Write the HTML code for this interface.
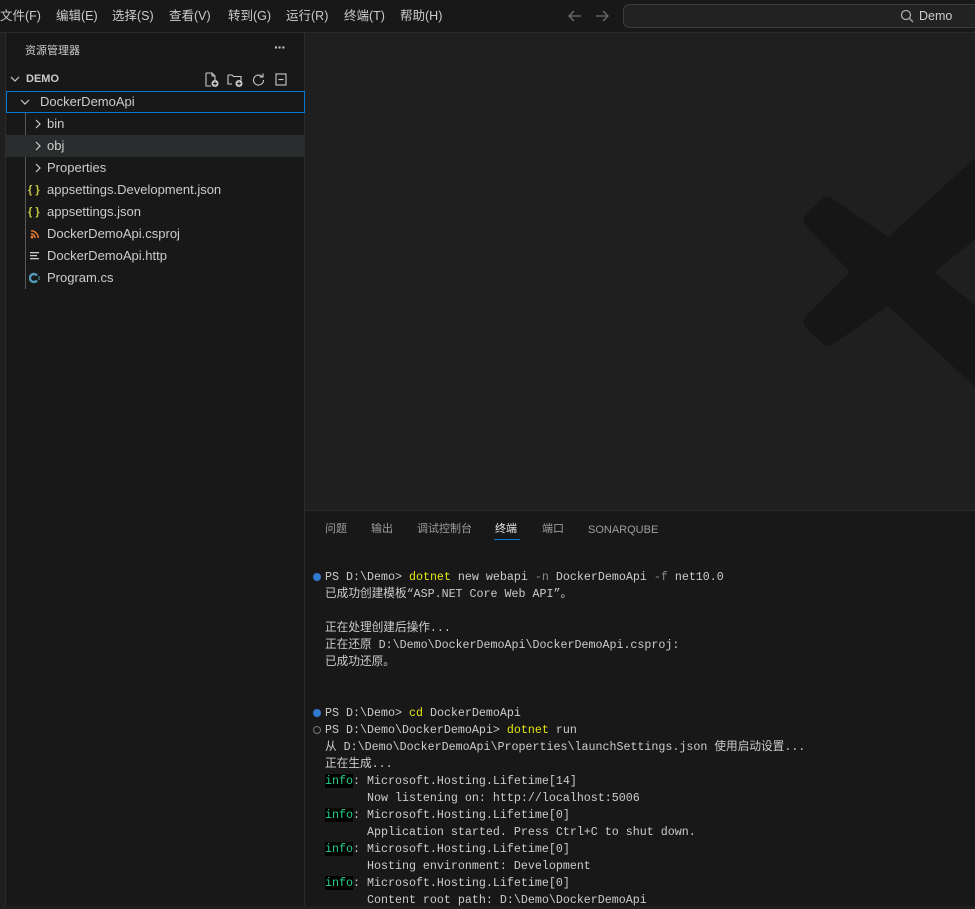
<!DOCTYPE html>
<html><head><meta charset="utf-8"><style>
*{margin:0;padding:0;box-sizing:border-box}
html,body{width:975px;height:906px;overflow:hidden;background:#1f1f1f;font-family:"Liberation Sans","Noto Sans CJK SC",sans-serif;color:#ccc}
.title{position:absolute;left:0;top:0;width:975px;height:33px;background:#181818;border-bottom:1px solid #2b2b2b}
.menu{position:absolute;top:8px;font-size:12.5px;line-height:16px;color:#ccc}
.search{position:absolute;left:623px;top:4px;width:360px;height:24px;background:#222;border:1px solid #3c3c3c;border-radius:6px}
.side{position:absolute;left:5px;top:33px;width:300px;height:873px;background:#181818;border-left:1px solid #2b2b2b;border-right:1px solid #2b2b2b}
.row{position:absolute;left:0;width:299px;height:22px;font-size:13px;line-height:22px;color:#ccc}
.t{position:absolute;left:41px}
.panel{position:absolute;left:305px;top:510px;width:670px;height:396px;background:#181818;border-top:1px solid #2b2b2b}
.tab{position:absolute;top:11px;font-size:11px;line-height:14px;color:#9d9d9d}
.term{position:absolute;left:20px;top:58px;font-family:"Liberation Mono","Noto Sans CJK SC",monospace;font-size:11.67px;line-height:17px;color:#ccc;white-space:pre}
.y{color:#e5e510}.g{color:#23d18b;background:#000}.m{color:#8b8b8b}
.dot{position:absolute;left:8px;width:8px;height:8px;border-radius:50%}
</style></head><body>
<div class="title">
<span class="menu" style="left:0">文件(F)</span>
<span class="menu" style="left:56px">编辑(E)</span>
<span class="menu" style="left:112px">选择(S)</span>
<span class="menu" style="left:169px">查看(V)</span>
<span class="menu" style="left:228px">转到(G)</span>
<span class="menu" style="left:286px">运行(R)</span>
<span class="menu" style="left:344px">终端(T)</span>
<span class="menu" style="left:400px">帮助(H)</span>
<svg style="position:absolute;left:567px;top:8px" width="44" height="16" fill="none" stroke="#6e6e6e" stroke-width="1.3"><path d="M2 8h12M7 3L2 8l5 5"/><path d="M29 8h12M36 3l5 5-5 5"/></svg>
<div class="search"><svg style="position:absolute;left:276px;top:4px" width="14" height="14" fill="none" stroke="#aaa" stroke-width="1.3"><circle cx="6" cy="6" r="4.5"/><path d="M9.3 9.3L13 13"/></svg><span style="position:absolute;left:295px;top:4px;font-size:12.5px;line-height:15px;color:#ccc">Demo</span></div>
</div>
<svg style="position:absolute;left:0;top:0" width="975" height="510"><path fill="#161616" d="M830 197 Q826 195 822 199 L806 214 Q801 220 806 226 L850 272 L806 316 Q801 322 806 328 L822 343 Q826 347 832 345 L888 306 L975 387 L975 305 L934 272 L975 240 L975 158 L888 237 Z"/></svg>
<div class="side">
<div style="position:absolute;left:19px;top:11px;font-size:11px;line-height:14px;color:#ccc">资源管理器</div>
<div style="position:absolute;left:268px;top:6px;font-size:14px;color:#ccc;letter-spacing:-1px;font-weight:bold">···</div>
<div class="row" style="top:35px"><svg style="position:absolute;left:4px;top:6px" width="10" height="10" fill="none" stroke="#ccc" stroke-width="1.2"><path d="M1 3l4 4 4-4"/></svg><span style="position:absolute;left:20px;font-size:11px;font-weight:bold">DEMO</span>
<svg style="position:absolute;left:198px;top:4px" width="96" height="16" fill="none" stroke="#ccc" stroke-width="1.1"><path d="M2 1h6l3 3v5M2 1v13h5M8 1v3h3"/><circle cx="11" cy="11.5" r="3.5" fill="#ccc" stroke="none"/><path d="M11 9.5v4M9 11.5h4" stroke="#181818"/><path d="M24 3h4l1.5 1.5H37v4M24 3v9h4"/><circle cx="35" cy="11.5" r="3.5" fill="#ccc" stroke="none"/><path d="M35 9.5v4M33 11.5h4" stroke="#181818"/><path d="M58 4.5A5 5 0 1 0 59.5 8M59 1.5v3.5h-3.5"/><rect x="72" y="2" width="10" height="11"/><path d="M74.5 7.5h5"/></svg></div>
<div class="row" style="top:58px;border:1px solid #0078d4;height:22px;line-height:20px"><svg style="position:absolute;left:13px;top:5px" width="10" height="10" fill="none" stroke="#ccc" stroke-width="1.2"><path d="M1 3l4 4 4-4"/></svg><span style="position:absolute;left:33px">DockerDemoApi</span></div>
<div style="position:absolute;left:19px;top:80px;width:1px;height:176px;background:#585858"></div>
<div class="row" style="top:80px"><svg style="position:absolute;left:27px;top:6px" width="10" height="10" fill="none" stroke="#ccc" stroke-width="1.2"><path d="M3 1l4 4-4 4"/></svg><span class="t">bin</span></div>
<div class="row" style="top:102px;background:#2a2d2e"><svg style="position:absolute;left:27px;top:6px" width="10" height="10" fill="none" stroke="#ccc" stroke-width="1.2"><path d="M3 1l4 4-4 4"/></svg><span class="t">obj</span></div>
<div class="row" style="top:124px"><svg style="position:absolute;left:27px;top:6px" width="10" height="10" fill="none" stroke="#ccc" stroke-width="1.2"><path d="M3 1l4 4-4 4"/></svg><span class="t">Properties</span></div>
<div class="row" style="top:146px"><span style="position:absolute;left:22px;color:#cbcb41;font-size:11px;font-weight:bold">{ }</span><span class="t">appsettings.Development.json</span></div>
<div class="row" style="top:168px"><span style="position:absolute;left:22px;color:#cbcb41;font-size:11px;font-weight:bold">{ }</span><span class="t">appsettings.json</span></div>
<div class="row" style="top:190px"><svg style="position:absolute;left:24px;top:6px" width="10" height="10" fill="#e37933"><circle cx="2" cy="8" r="1.5"/><path d="M1 4a5 5 0 0 1 5 5H4.5A3.5 3.5 0 0 0 1 5.5z"/><path d="M1 1a8 8 0 0 1 8 8H7.5A6.5 6.5 0 0 0 1 2.5z"/></svg><span class="t">DockerDemoApi.csproj</span></div>
<div class="row" style="top:212px"><svg style="position:absolute;left:24px;top:6px" width="10" height="10" fill="#ccc"><rect x="0" y="1" width="9" height="1.3"/><rect x="0" y="4" width="7" height="1.3"/><rect x="0" y="7" width="9" height="1.3"/></svg><span class="t">DockerDemoApi.http</span></div>
<div class="row" style="top:234px"><svg style="position:absolute;left:23px;top:5px" width="12" height="12" fill="none" stroke="#519aba" stroke-width="2.4"><path d="M8 3.5A4 4 0 1 0 8 8.5"/><path d="M10 4v4" stroke-width="1"/></svg><span class="t">Program.cs</span></div>
</div>
<div class="panel">
<span class="tab" style="left:20px">问题</span>
<span class="tab" style="left:66px">输出</span>
<span class="tab" style="left:112px">调试控制台</span>
<span class="tab" style="left:190px;color:#e7e7e7">终端</span>
<div style="position:absolute;left:189px;top:28px;width:26px;height:1px;background:#0078d4"></div>
<span class="tab" style="left:237px">端口</span>
<span class="tab" style="left:283px;top:12px">SONARQUBE</span>
<div class="dot" style="top:62px;background:#3794ff;opacity:.8"></div>
<div class="dot" style="top:198px;background:#3794ff;opacity:.8"></div>
<div class="dot" style="top:215px;border:1.5px solid #777"></div>
<div class="term">PS D:\Demo&gt; <span class="y">dotnet</span> new webapi <span class="m">-n</span> DockerDemoApi <span class="m">-f</span> net10.0
已成功创建模板“ASP.NET Core Web API”。

正在处理创建后操作...
正在还原 D:\Demo\DockerDemoApi\DockerDemoApi.csproj:
已成功还原。


PS D:\Demo&gt; <span class="y">cd</span> DockerDemoApi
PS D:\Demo\DockerDemoApi&gt; <span class="y">dotnet</span> run
从 D:\Demo\DockerDemoApi\Properties\launchSettings.json 使用启动设置...
正在生成...
<span class="g">info</span>: Microsoft.Hosting.Lifetime[14]
      Now listening on: http://localhost:5006
<span class="g">info</span>: Microsoft.Hosting.Lifetime[0]
      Application started. Press Ctrl+C to shut down.
<span class="g">info</span>: Microsoft.Hosting.Lifetime[0]
      Hosting environment: Development
<span class="g">info</span>: Microsoft.Hosting.Lifetime[0]
      Content root path: D:\Demo\DockerDemoApi</div>
</div>
</body></html>
